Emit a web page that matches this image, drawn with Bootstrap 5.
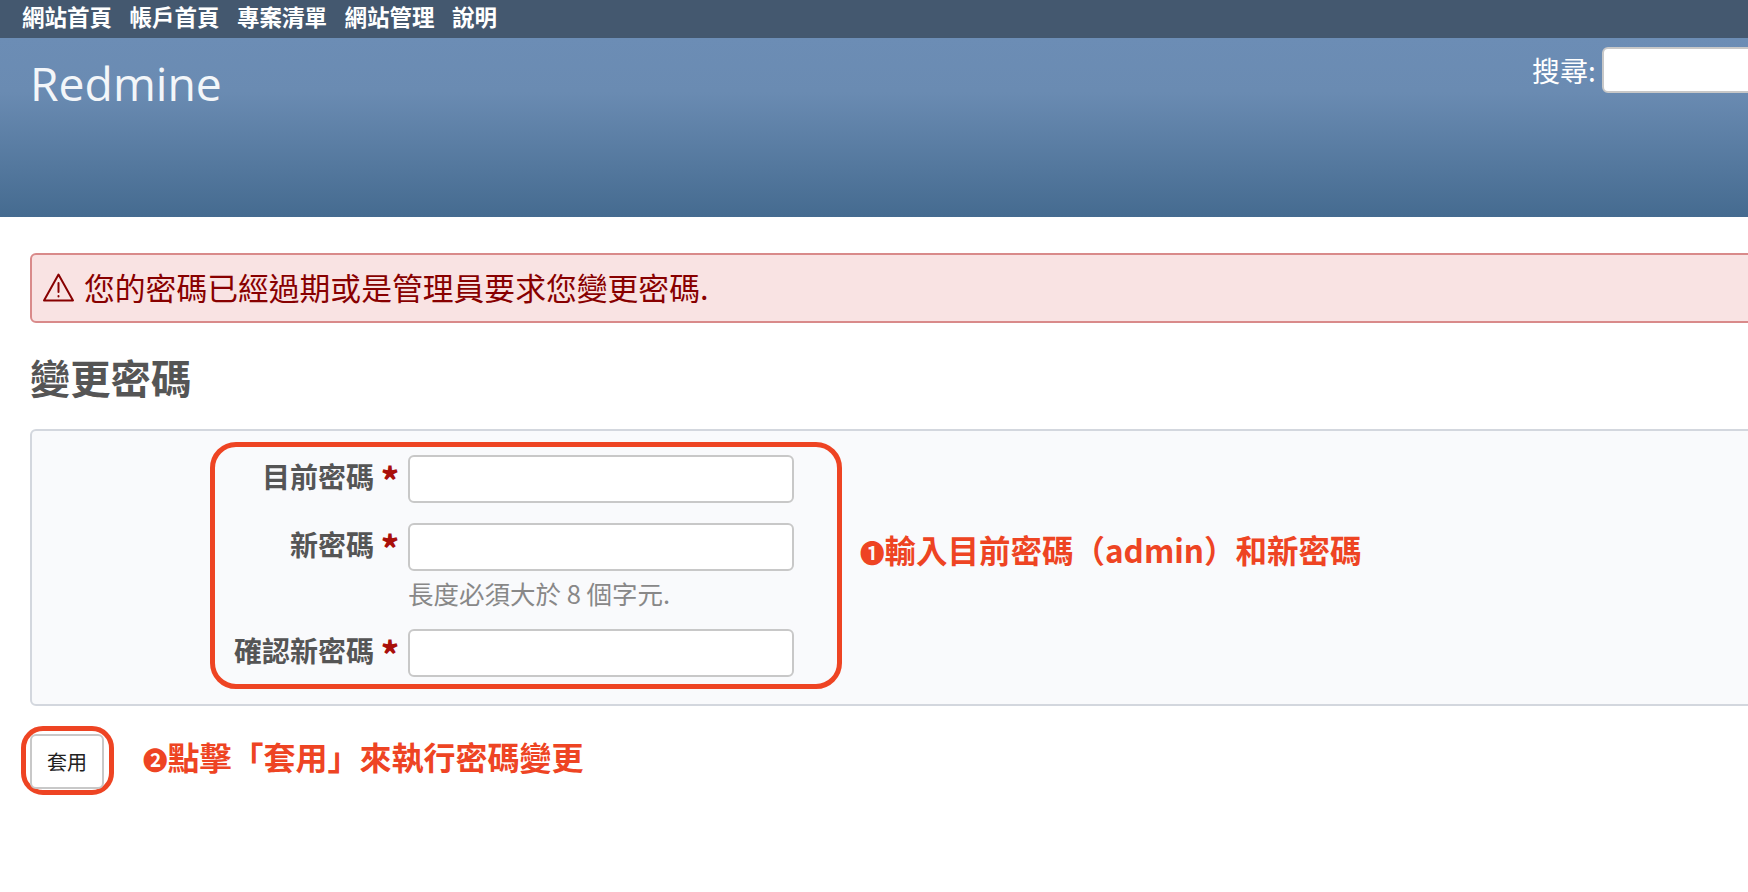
<!DOCTYPE html>
<html lang="zh-Hant">
<head>
<meta charset="utf-8">
<title>變更密碼</title>
<link href="https://cdn.jsdelivr.net/npm/bootstrap@5.3.0/dist/css/bootstrap.min.css" rel="stylesheet">
<style>
html,body{overflow:hidden;height:892px}
body{font-family:"Noto Sans CJK TC","Liberation Sans",sans-serif;color:#333;background:#fff}
.topbar{height:38px;background:#44586f;padding:0 0 6px 22px;gap:17.5px}
.topbar a{color:#fff;font-size:22.5px;font-weight:700;line-height:32px;text-decoration:none}
.site-head{height:179px;background:linear-gradient(180deg,#6c8db5 0%,#6a8bb2 30%,#456b90 100%);padding-left:30px;color:#fff}
.site-title{font-family:"Open Sans","Noto Sans",sans-serif;font-size:46.3px;font-weight:400;line-height:60px;margin:16px 0 0;color:#f3f6f9}
.search-zone{width:216px;flex:none;margin-top:9px;gap:6px;font-size:28px;line-height:46px}
.search-zone label{flex:none;white-space:nowrap}
.search-input{width:300px;flex:none;height:46px;border:2px solid #c8c8c8;border-radius:6px;background:#fff}
.main-area{padding:36px 0 0 30px;width:1800px}
.flash-err{height:70px;background:#f9e3e3;border:2px solid #d98a8a;border-radius:6px;color:#880000;font-size:30.8px;padding:0 0 2px 10px;gap:9px;margin:0}
.page-title{font-size:40.3px;font-weight:700;color:#555;line-height:56px;margin:26px 0 24px}
.pw-box{background:#f9fafc;border:2px solid #d3d7de;border-radius:6px;height:277px}
.ring-area{border:5px solid #ee4423;border-radius:26px;margin:11px 0 0 178px;width:632px;height:247px;padding:8px 43px 0 0}
.f-row{gap:9px;margin-bottom:20px}
.f-label{width:184px;flex:none;text-align:right;font-size:28px;font-weight:700;color:#555;line-height:40px;white-space:nowrap;padding-bottom:6px}
.f-label span{color:#a90f0a;margin-left:7px;font-size:34px;line-height:28px;font-weight:900;vertical-align:-5px}
.f-input{width:386px;height:48px;border:2px solid #c8c8c8;border-radius:6px;background:#fff;box-shadow:none;padding:0 8px}
.f-hint{margin:-16px 0 18px 193px;font-size:25.5px;line-height:36px;color:#888}
.callout{color:#ee4423;font-weight:700;white-space:nowrap}
.callout i{font-style:normal;font-size:24.5px}
.callout-one{font-size:31.5px;margin-left:18px;margin-bottom:36px}
.callout-two{font-size:32px;margin-left:29px;margin-top:11px}
.ring-btn{border:5px solid #ee4423;border-radius:22px;width:93px;height:69px;margin:20px 0 0 -9px;padding:3px 0 0 4px}
.apply-btn{width:74px;height:55px;padding:0;background:#fff;border:2px solid #c8c8c8;border-radius:6px;color:#222;font-size:20px;line-height:1}
</style>
</head>
<body>
<nav class="topbar d-flex align-items-center">
  <a href="#">網站首頁</a><a href="#">帳戶首頁</a><a href="#">專案清單</a><a href="#">網站管理</a><a href="#">說明</a>
</nav>
<header class="site-head d-flex justify-content-between">
  <h1 class="site-title">Redmine</h1>
  <div class="search-zone d-flex align-items-start">
    <label>搜尋:</label>
    <input class="search-input" type="text" aria-label="搜尋">
  </div>
</header>
<main class="main-area">
  <div class="alert flash-err d-flex align-items-center" role="alert">
    <svg width="33" height="31" viewBox="0 0 33 31" fill="none" stroke="#880000" stroke-width="2" stroke-linejoin="round" stroke-linecap="round" aria-hidden="true"><path d="M16.5 2.5 L31 28.5 H2 Z"/><path d="M16.5 11 V20"/><path d="M16.5 24 V24.6"/></svg>
    <span>您的密碼已經過期或是管理員要求您變更密碼.</span>
  </div>
  <h2 class="page-title">變更密碼</h2>
  <form>
    <div class="pw-box d-flex align-items-start">
      <div class="ring-area">
        <div class="f-row d-flex align-items-center"><label class="f-label">目前密碼<span>*</span></label><input class="form-control f-input" type="password"></div>
        <div class="f-row d-flex align-items-center"><label class="f-label">新密碼<span>*</span></label><input class="form-control f-input" type="password"></div>
        <div class="f-hint">長度必須大於 8 個字元.</div>
        <div class="f-row d-flex align-items-center"><label class="f-label">確認新密碼<span>*</span></label><input class="form-control f-input" type="password"></div>
      </div>
      <div class="callout callout-one align-self-center"><i>❶</i>輸入目前密碼（admin）和新密碼</div>
    </div>
    <div class="d-flex align-items-center">
      <div class="ring-btn"><button type="button" class="btn apply-btn">套用</button></div>
      <div class="callout callout-two"><i>❷</i>點擊「套用」來執行密碼變更</div>
    </div>
  </form>
</main>
<script src="https://cdn.jsdelivr.net/npm/bootstrap@5.3.0/dist/js/bootstrap.bundle.min.js"></script>
</body>
</html>
